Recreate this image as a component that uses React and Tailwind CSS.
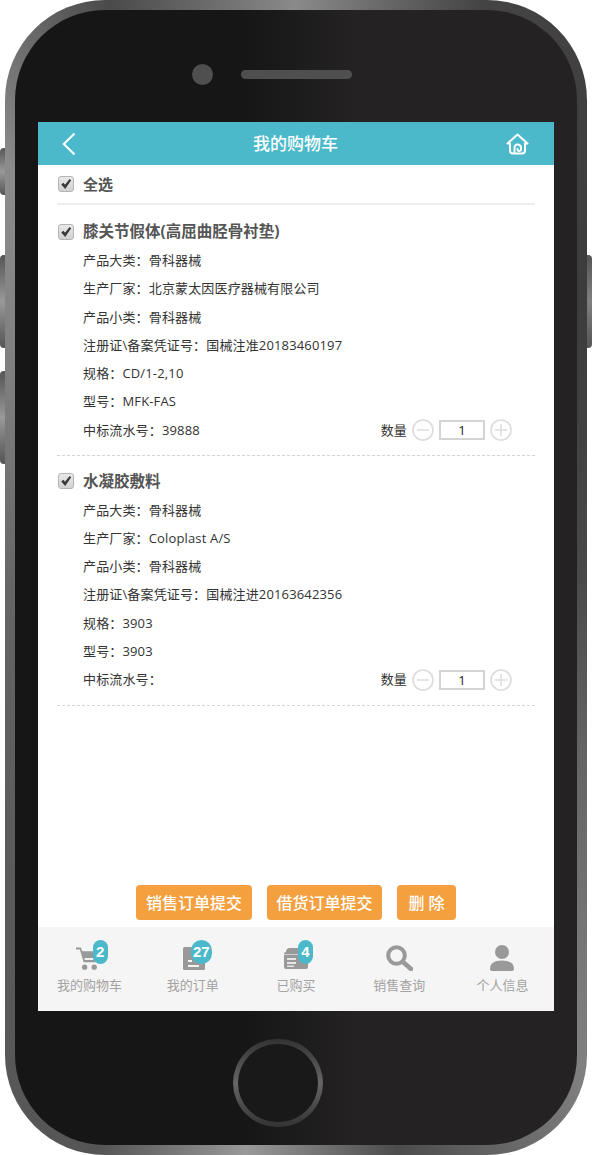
import React from "react"

const cjk = { fontFamily: '"Open Sans", "Noto Sans CJK SC", sans-serif' }

const items = [
  {
    title: "膝关节假体(高屈曲胫骨衬垫)",
    rows: [
      "产品大类：骨科器械",
      "生产厂家：北京蒙太因医疗器械有限公司",
      "产品小类：骨科器械",
      "注册证\\备案凭证号：国械注准20183460197",
      "规格：CD/1-2,10",
      "型号：MFK-FAS",
      "中标流水号：39888",
    ],
  },
  {
    title: "水凝胶敷料",
    rows: [
      "产品大类：骨科器械",
      "生产厂家：Coloplast A/S",
      "产品小类：骨科器械",
      "注册证\\备案凭证号：国械注进20163642356",
      "规格：3903",
      "型号：3903",
      "中标流水号：",
    ],
  },
]

function Check() {
  return (
    <span className="flex h-[16px] w-[16px] shrink-0 items-center justify-center rounded-[3px] border border-[#b5b5b5] bg-gradient-to-b from-[#e8e8e8] to-[#d2d2d2]">
      <svg width="12" height="12" viewBox="0 0 12 12">
        <path d="M1.2 6.6 L3.4 4.8 L5 6.8 L9.6 1 L11.2 2.2 L5.2 11 Z" fill="#3a3a3a" />
      </svg>
    </span>
  )
}

function RoundBtn({ plus }) {
  return (
    <svg width="22" height="22" viewBox="0 0 22 22" className="shrink-0">
      <circle cx="11" cy="11" r="10" fill="none" stroke="#dcdcdc" strokeWidth="1.6" />
      <path d={plus ? "M5 11H17M11 5V17" : "M5 11H17"} stroke="#dcdcdc" strokeWidth="1.5" />
    </svg>
  )
}

function Item({ item, first }) {
  return (
    <div className={`border-b border-dashed border-[#d4d4d4] pb-[11px] ${first ? "pt-[13px]" : "pt-[11px]"}`}>
      <div className="flex h-[28.7px] items-start gap-[9px] pl-px">
        <div className="flex h-[28px] items-center gap-[9px]">
          <Check />
          <span className="text-[15.5px] font-bold text-[#555]">{item.title}</span>
        </div>
      </div>
      {item.rows.map((r, i) => (
        <div key={i} className="flex h-[28.25px] items-center pl-[26px] text-[13px] tracking-[0.15px] text-[#333]">
          <span>{r}</span>
          {i === 6 && (
            <div className="ml-auto mr-[23px] flex items-center">
              <span className="mr-[5px]">数量</span>
              <RoundBtn />
              <input
                readOnly
                value="1"
                style={cjk}
                className="mx-[5px] h-[20px] w-[46px] border-2 border-[#d4d4d4] text-center text-[13px] text-[#222] outline-none"
              />
              <RoundBtn plus />
            </div>
          )}
        </div>
      ))}
    </div>
  )
}

function Badge({ children, className }) {
  return (
    <span className={`absolute top-[-5px] flex h-[24px] items-center justify-center rounded-full bg-[#4bb9ca] font-['Liberation_Sans'] text-[15px] font-bold text-white ${className}`}>
      {children}
    </span>
  )
}

function NavItem({ label, children }) {
  return (
    <div className="flex flex-1 flex-col items-center pt-[18px]">
      <div className="relative flex h-[26px] w-[30px] items-center justify-center">{children}</div>
      <span className="mt-[4px] text-[13px] leading-[20px] text-[#a3a3a3]">{label}</span>
    </div>
  )
}

function OrangeBtn({ children, className }) {
  return (
    <button className={`h-[35px] rounded-[4px] bg-[#f5a03f] text-[16px] font-medium text-white ${className}`}>
      {children}
    </button>
  )
}

export default function App() {
  return (
    <div className="relative h-[1155px] w-[592px] overflow-hidden bg-white" style={cjk}>
      <div className="absolute left-0 top-[148px] h-[47px] w-[7px] rounded-l-[4px] bg-gradient-to-b from-[#555] via-[#999] to-[#555]" />
      <div className="absolute left-0 top-[255px] h-[93px] w-[7px] rounded-l-[4px] bg-gradient-to-b from-[#555] via-[#999] to-[#555]" />
      <div className="absolute left-0 top-[371px] h-[93px] w-[7px] rounded-l-[4px] bg-gradient-to-b from-[#555] via-[#999] to-[#555]" />
      <div className="absolute right-0 top-[255px] h-[93px] w-[7px] rounded-r-[4px] bg-gradient-to-b from-[#555] via-[#808080] to-[#555]" />

      <div className="relative mx-[5px] h-[1155px] w-[582px] rounded-[100px] bg-[conic-gradient(from_0deg,#8a8a8a_0deg,#444_18deg,#3c3c3c_45deg,#4a4a4a_90deg,#6e6e6e_135deg,#808080_150deg,#4c4c4c_170deg,#999_185deg,#555_199deg,#666_270deg,#8c8c8c_325deg,#4a4a4a_342deg,#8a8a8a_360deg)] p-[10px]">
        <div className="flex h-[1135px] flex-col items-center rounded-[90px] bg-gradient-to-r from-[#161616] from-40% to-[#242223] to-60%">
          <div className="mt-[54px] flex w-full items-center gap-[28px] pl-[177px]">
            <div className="h-[21px] w-[21px] rounded-full bg-[#4f4f4f]" />
            <div className="h-[9px] w-[111px] rounded-full bg-[#4f4f4f]" />
          </div>

          <div className="mt-[37px] flex h-[889px] w-[516px] flex-col bg-white">
            <div className="flex h-[43px] shrink-0 items-center justify-between bg-[#4bb9ca] pl-[24px] pr-[25px]">
              <div className="w-[23px]">
                <svg width="14" height="24" viewBox="0 0 14 24" fill="none" className="block">
                  <path d="M12.5 1.5 L1.8 12 L12.5 22.5" stroke="white" strokeWidth="2" />
                </svg>
              </div>
              <span className="text-[17px] font-medium text-white">我的购物车</span>
              <svg width="23" height="22" viewBox="0 0 23 22" fill="none" stroke="white" strokeWidth="2" strokeLinecap="round" strokeLinejoin="round">
                <path d="M1.5 10.5 L11.5 1.5 L21.5 10.5 H19 V17.5 Q19 20.5 16 20.5 H7 Q4 20.5 4 17.5 V10.5 Z" />
                <path d="M8.5 20 V15 Q8.5 11.5 11.5 11.5 Q15 11.5 15 15 V16.5 Q15 18 13 18 Q11.5 18 11.5 16" />
              </svg>
            </div>

            <div className="px-[19px]">
              <div className="flex h-[40px] items-center gap-[9px] border-b-2 border-[#eeeeee] pl-px">
                <Check />
                <span className="text-[15px] font-bold text-[#555]">全选</span>
              </div>
              {items.map((item, i) => (
                <Item key={i} item={item} first={i === 0} />
              ))}
            </div>

            <div className="mb-[7px] mt-auto flex justify-center gap-[15px]">
              <OrangeBtn className="w-[116px]">销售订单提交</OrangeBtn>
              <OrangeBtn className="w-[115px]">借货订单提交</OrangeBtn>
              <OrangeBtn className="w-[59px]">删 除</OrangeBtn>
            </div>

            <div className="flex h-[84px] shrink-0 bg-[#f5f5f5]">
              <NavItem label="我的购物车">
                <svg width="23" height="25" viewBox="0 0 24 25" className="mr-[4px]">
                  <path d="M0 1 H5 L6.5 5 H23 L21 16.5 H8 L4 3.2 H0 Z" fill="#999" />
                  <rect x="9" y="12" width="9" height="2" fill="#f5f5f5" />
                  <circle cx="9" cy="21.5" r="2.8" fill="#999" />
                  <circle cx="19" cy="21.5" r="2.8" fill="#999" />
                </svg>
                <Badge className="left-[18px] w-[15px]">2</Badge>
              </NavItem>
              <NavItem label="我的订单">
                <svg width="22" height="23" viewBox="0 0 22 23" className="ml-[2px]">
                  <rect x="0" y="0" width="22" height="23" rx="1.5" fill="#999" />
                  <rect x="5" y="13" width="4" height="2" fill="#f5f5f5" />
                  <rect x="5" y="18" width="11" height="2" fill="#f5f5f5" />
                </svg>
                <Badge className="left-[13px] w-[21px]">27</Badge>
              </NavItem>
              <NavItem label="已购买">
                <svg width="24" height="22" viewBox="0 0 24 22">
                  <path d="M2 5 Q2 1 6 1 H18 Q22 1 22 5 H22.5 Q24 5 24 7 V20 Q24 22 22 22 H2 Q0 22 0 20 V7 Q0 5 2 5 Z" fill="#999" />
                  <rect x="0" y="7" width="24" height="1" fill="#cfcfcf" />
                  <rect x="3" y="11" width="9" height="2" fill="#e6e6e6" />
                  <rect x="3" y="15" width="9" height="2" fill="#e6e6e6" />
                  <rect x="3" y="18.5" width="7" height="1.5" fill="#e6e6e6" />
                </svg>
                <Badge className="left-[17px] w-[15px]">4</Badge>
              </NavItem>
              <NavItem label="销售查询">
                <svg width="27" height="26" viewBox="0 0 27 26" fill="none">
                  <circle cx="10.5" cy="10.5" r="8.3" stroke="#999" strokeWidth="4" />
                  <path d="M17 17 L25 24" stroke="#999" strokeWidth="4.5" strokeLinecap="round" />
                </svg>
              </NavItem>
              <NavItem label="个人信息">
                <svg width="24" height="26" viewBox="0 0 24 26">
                  <circle cx="12" cy="7" r="7" fill="#999" />
                  <path d="M0 24 Q0 15.5 12 15.5 Q24 15.5 24 24 Q24 26 21 26 H3 Q0 26 0 24 Z" fill="#999" />
                </svg>
              </NavItem>
            </div>
          </div>

          <div className="mr-[36px] mt-[28px] h-[88px] w-[90px] rounded-full bg-gradient-to-b from-[#333] via-[#666] to-[#333] p-[5px]">
            <div className="h-full w-full rounded-full bg-[#191919]" />
          </div>
        </div>
      </div>
    </div>
  )
}
